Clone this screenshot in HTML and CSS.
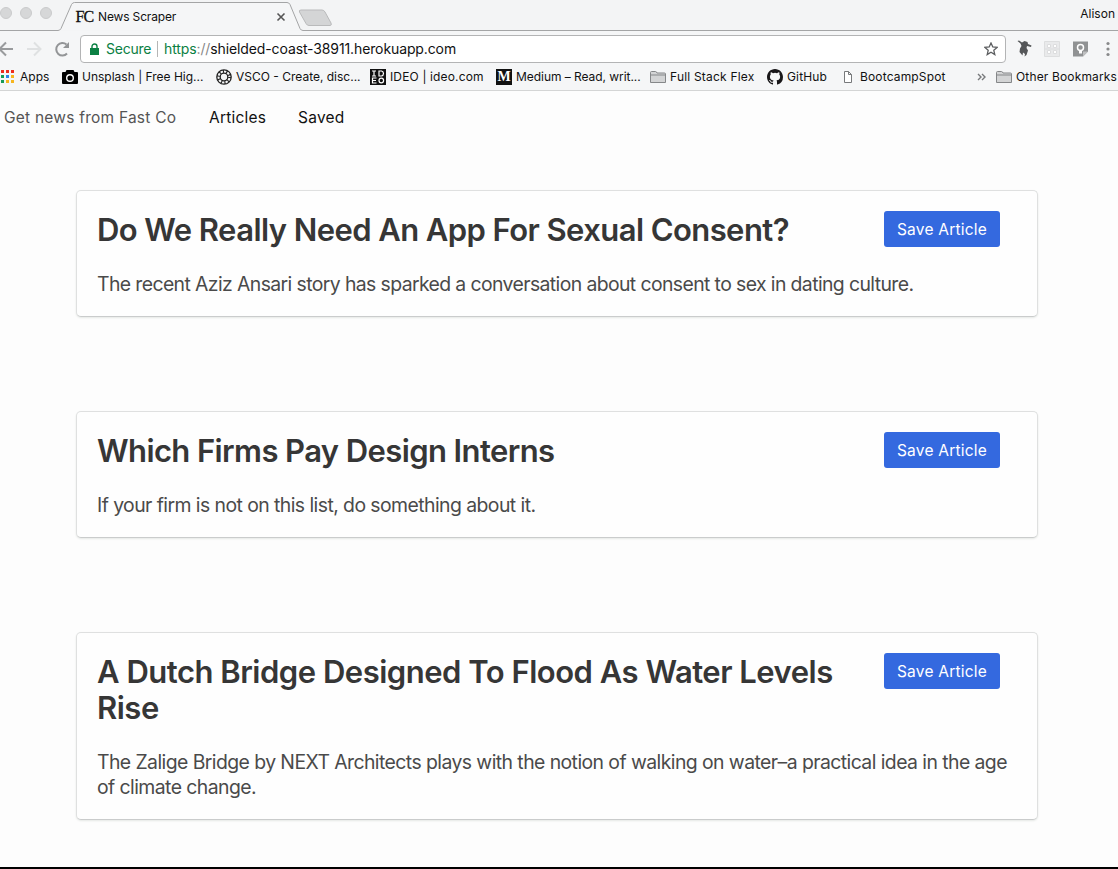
FILE: index.html
```html
<!DOCTYPE html>
<html lang="en">
<head>
<meta charset="utf-8">
<title>News Scraper</title>
<link rel="stylesheet" href="styles.css">
</head>
<body>
<div class="window">
  <header class="chrome">
    <div class="tabstrip">
      <svg class="tab-shape" width="1118" height="31" viewBox="0 0 1118 31">
        <path d="M299.500 12q-.8-2 1.500-2h21q2 0 3 2l6 11q1 2.500-1 2.500h-21q-2 0-3-2z" fill="#d4d5d6" stroke="#b9babb"/>
        <path d="M0 30.500H58q2 0 3-2L71.500 4.500q1-2 3-2H287q2 0 3 2L300 28.500q1 2 3 2H1118" fill="#f5f6f7" stroke="#a4a5a6"/>
      </svg>
      <div class="lights"><i></i><i></i><i></i></div>
      <div class="tab"><b class="favicon">FC</b><span class="tab-title">News Scraper</span>
        <svg class="close" width="10" height="10" viewBox="0 0 10 10"><path d="M1.500 1.500l7 7M8.500 1.500L1.500 8.500" stroke="#555" stroke-width="1.600"/></svg>
      </div>
      <span class="user">Alison</span>
    </div>
    <div class="toolbar">
      <div class="history">
        <svg width="80" height="30" viewBox="0 0 80 30" fill="none" stroke-width="2">
          <path d="M13 15H0M6 8.500L-.5 15 6 21.500" stroke="#999b9d"/>
          <path d="M27 15h13M34 8.500l6.500 6.500-6.500 6.500" stroke="#dfe1e2"/>
          <path d="M67 19.500A6.200 6.200 0 1 1 66.500 10.600" stroke="#939597"/>
          <path d="M69 8v6h-6z" fill="#939597"/>
        </svg>
      </div>
      <div class="address">
        <svg class="lock" width="9" height="12" viewBox="0 0 9 12"><path d="M0 5h9v7H0z" fill="#0b8043"/><path d="M2 5.500V3.500a2.500 2.500 0 0 1 5 0v2" fill="none" stroke="#0b8043" stroke-width="1.400"/></svg>
        <span class="secure">Secure</span>
        <span class="url"><em>https</em><s>://</s>shielded-coast-38911.herokuapp.com</span>
        <svg class="star" width="14" height="14" viewBox="0 0 14 14"><path d="M7 1l1.800 4 4.300.4-3.300 2.900 1 4.300L7 10.300l-3.800 2.300 1-4.300L.9 5.400 5.200 5z" fill="none" stroke="#5c5e60" stroke-width="1.300"/></svg>
      </div>
      <svg class="extensions" width="112" height="30" viewBox="0 0 112 30">
        <path d="M11.500 7l1.500-.5 3 2 2.500-1.500 3 1 .5 2 3.500 1.500-.5 1.500-4-1-.5 2 1.500 2.500-1.500 4.500-2 1.500.5-2.500-2-1.500-.5 3-3-3.500.5-3.500 1.500-2.500-1-2.500z" fill="#555759"/>
        <path d="M38.500 7.500h15v15h-15z" fill="#e9eaeb" stroke="#dddedf"/><path d="M41.500 10.500h3v3h-3zM47.500 10.500h3v3h-3zM41.500 16.500h3v3h-3zM47.500 16.500h3v3h-3zM38.500 15h15" fill="#fff" stroke="#dcddde"/>
        <path d="M67 7.500h15v10l-5 5H67z" fill="#909293"/><path d="M77 22.500v-5h5z" fill="#bfc0c1"/><circle cx="74.500" cy="13.500" r="3" fill="none" stroke="#fff" stroke-width="1.500"/><path d="M73 16.500h3v3h-3z" fill="#fff"/>
        <g fill="#88898a"><circle cx="102" cy="9.500" r="1.600"/><circle cx="102" cy="15" r="1.600"/><circle cx="102" cy="20.500" r="1.600"/></g>
      </svg>
    </div>
    <nav class="bookmarks">
      <div class="bookmark"><svg width="14" height="14" viewBox="0 0 14 14"><path d="M1 0h3v3H1zM6 0h3v3H6zM11 0h3v3h-3z" fill="#ee2c1e"/><path d="M1 5h3v3H1z" fill="#169b57"/><path d="M6 5h3v3H6z" fill="#2a83e8"/><path d="M11 5h3v3h-3zM6 10h3v3H6zM11 10h3v3h-3z" fill="#f6b51e"/><path d="M1 10h3v3H1z" fill="#169b57"/></svg><span class="apps">Apps</span></div>
      <div class="bookmark"><svg width="16" height="16" viewBox="0 0 16 16"><path d="M4.500 1h7l1 2H15q1 0 1 1v10q0 1-1 1H1q-1 0-1-1V4q0-1 1-1h2.500z"/><circle cx="8" cy="9" r="3.300" fill="none" stroke="#fff" stroke-width="1.400"/></svg><span class="unsplash">Unsplash | Free Hig...</span></div>
      <div class="bookmark"><svg width="16" height="16" viewBox="0 0 16 16" fill="none" stroke="#222"><circle cx="8" cy="8" r="7.200" stroke-width="1.300"/><circle cx="8" cy="8" r="3.800" stroke-width="1.300"/><circle cx="8" cy="8" r="5.500" stroke-width="3" stroke-dasharray="1.100 2.350"/></svg><span class="vsco">VSCO - Create, disc...</span></div>
      <div class="bookmark"><svg width="16" height="16" viewBox="0 0 16 16"><path d="M0 0h16v16H0z" fill="#111"/><path d="M2 2h4M4 2v5M2 7h4M9 2v5h2.500q2-.5 2-2.500t-2-2.500zM6.500 9H2.500v5h4M2.500 11.500h3.500" fill="none" stroke="#fff" stroke-width="1.200"/><circle cx="11.300" cy="11.500" r="2.300" fill="none" stroke="#fff" stroke-width="1.200"/></svg><span class="ideo">IDEO | ideo.com</span></div>
      <div class="bookmark"><b class="medium-logo">M</b><span class="medium">Medium – Read, writ...</span></div>
      <div class="bookmark"><svg width="16" height="14" viewBox="0 0 16 14"><path d="M.5 12.500v-10q0-1 1-1h4q1 0 1.500 1.500h7.500q1 0 1 1v8.500z" fill="#d3d4d5" stroke="#858789"/><path d="M1 5h14" stroke="#858789"/></svg><span class="stack">Full Stack Flex</span></div>
      <div class="bookmark"><svg width="16" height="16" viewBox="0 0 16 16"><path fill="#181618" d="M8 0C3.580 0 0 3.580 0 8c0 3.540 2.290 6.530 5.470 7.590.4.070.55-.17.55-.38 0-.19-.01-.82-.01-1.490-2.010.37-2.530-.49-2.690-.94-.09-.23-.48-.94-.82-1.130-.28-.15-.68-.52-.01-.53.63-.01 1.080.58 1.230.82.72 1.210 1.870.87 2.330.66.07-.52.28-.87.51-1.070-1.780-.2-3.640-.89-3.640-3.950 0-.87.31-1.590.82-2.150-.08-.2-.36-1.020.08-2.120 0 0 .67-.21 2.200.82a7.400 7.400 0 0 1 4 0c1.530-1.040 2.200-.82 2.200-.82.44 1.100.16 1.920.08 2.120.51.56.82 1.270.82 2.150 0 3.070-1.870 3.750-3.650 3.950.29.25.54.73.54 1.480 0 1.070-.01 1.930-.01 2.200 0 .21.15.46.55.38A8 8 0 0 0 16 8c0-4.420-3.580-8-8-8z"/></svg><span class="github">GitHub</span></div>
      <div class="bookmark page-bookmark"><svg width="8" height="12" viewBox="0 0 8 12"><path d="M.5.500h4l3 3v8h-7zM4.500.500v3h3" fill="#fff" stroke="#77797b"/></svg><span class="boot">BootcampSpot</span></div>
      <svg class="more" width="9" height="8" viewBox="0 0 9 8"><path d="M1 1l3 3-3 3M5 1l3 3-3 3" fill="none" stroke="#77797b" stroke-width="1.400"/></svg>
      <div class="bookmark"><svg width="16" height="14" viewBox="0 0 16 14"><path d="M.5 12.500v-10q0-1 1-1h4q1 0 1.500 1.500h7.500q1 0 1 1v8.500z" fill="#d3d4d5" stroke="#858789"/><path d="M1 5h14" stroke="#858789"/></svg><span class="other">Other Bookmarks</span></div>
    </nav>
  </header>
  <nav class="site-nav"><span class="brand">Get news from Fast Co</span><a class="link-articles">Articles</a><a class="link-saved">Saved</a></nav>
  <main class="articles">
    <article class="card">
      <div class="card-head"><h2 class="t1">Do We Really Need An App For Sexual Consent?</h2><button class="save">Save Article</button></div>
      <p class="p1">The recent Aziz Ansari story has sparked a conversation about consent to sex in dating culture.</p>
    </article>
    <article class="card">
      <div class="card-head"><h2 class="t2">Which Firms Pay Design Interns</h2><button class="save">Save Article</button></div>
      <p class="p2">If your firm is not on this list, do something about it.</p>
    </article>
    <article class="card">
      <div class="card-head"><h2 class="t3">A Dutch Bridge Designed To Flood As Water Levels<br>Rise</h2><button class="save">Save Article</button></div>
      <p class="p3">The Zalige Bridge by NEXT Architects plays with the notion of walking on water–a practical idea in the age<br>of climate change.</p>
    </article>
  </main>
</div>
</body>
</html>
```
FILE: styles.css
```css
* { box-sizing: border-box; }
body { margin: 0; font-family: Inter, "Liberation Sans", sans-serif; background: #fdfdfd; }
.window { width: 1118px; height: 869px; overflow: hidden; border-bottom: 2px solid #000; }
svg { display: block; flex: none; }
span, a, h2, p, button { white-space: nowrap; }
.chrome { height: 91px; background: #f5f6f7; border-bottom: 1px solid #d4d5d5; color: #111; }
.tabstrip { height: 31px; position: relative; display: flex; background: #f3f4f5; }
.tab-shape { position: absolute; left: 0; top: 0; }
.lights { position: relative; display: flex; gap: 8px; width: 75px; padding-top: 7px; }
.lights i { width: 12px; height: 12px; border-radius: 50%; background: #d6d7d8; border: 1px solid #cacbcc; }
.tab { position: relative; width: 211px; height: 33px; display: flex; align-items: center; font-size: 12px; }
.tab-title { letter-spacing: -0.15px; }
.favicon { font: 16px/16px "Liberation Serif", serif; letter-spacing: -1px; width: 23px; padding-left: 0.5px; -webkit-text-stroke: 0.3px #111; }
.close { margin-left: auto; }
.user { position: relative; margin-left: auto; padding: 6px 3px 0 0; font-size: 12px; line-height: 16px; }
.toolbar { height: 32px; display: flex; padding-top: 3px; }
.history { width: 80px; }
.address { width: 926px; height: 28px; margin-top: 1px; border: 1px solid #b3b4b5; border-radius: 4px; background: #fff; display: flex; align-items: center; padding: 0 7px 0 9px; font-size: 14px; }
.secure { margin-left: 7px; padding-right: 6px; border-right: 1px solid #b5b5b5; color: #0b8043; width: 52px; line-height: 16px; letter-spacing: -0.25px; }
.url { margin-left: 6px; padding-bottom: 2px; letter-spacing: -0.115px; }
.url em { font-style: normal; color: #0b8043; }
.url s { text-decoration: none; color: #888; }
.star { margin-left: auto; }
.bookmarks { height: 27px; display: grid; grid-template-columns: 62px 154px 154px 126px 154px 117px 75px 135px 19px 1fr; align-items: center; font-size: 12px; }
.bookmark { display: flex; align-items: center; gap: 4px; min-width: 0; }
.bookmark:first-child { gap: 6px; }
.ideo, .boot, .other, .github { letter-spacing: 0.15px; }
.stack { letter-spacing: 0.2px; }
.medium { letter-spacing: -0.05px; }
.page-bookmark { padding-left: 2px; gap: 8px; }
.medium-logo { width: 16px; height: 16px; background: #111; color: #fff; font: bold 14px/16px "Liberation Serif", serif; text-align: center; }
.site-nav { height: 53px; display: flex; align-items: center; padding-left: 4px; font-size: 15.500px; letter-spacing: 0.23px; color: #111; }
.brand { width: 205px; color: #555; }
.link-articles { width: 89px; }
.articles { margin: 46px 80px 0 76px; display: flex; flex-direction: column; gap: 94px; }
.card { border: 1px solid #dfe0e0; border-bottom-color: #cacccc; border-radius: 5px; padding: 20px 20px 19px; background: #fefefe; box-shadow: 0 1px 2px #e5e8e5; }
.card-head { display: flex; justify-content: space-between; align-items: flex-start; padding-right: 17px; }
h2 { margin: 0; padding-top: 1px; font-size: 31px; line-height: 36px; font-weight: 600; color: #363636; }
.t1 { letter-spacing: -0.570px; }
.t2 { letter-spacing: -0.600px; }
.t3 { letter-spacing: -0.490px; }
p { margin: 24px 0 0; font-size: 19.400px; line-height: 25px; color: #4a4a4a; }
.p1 { letter-spacing: -0.600px; }
.p2 { letter-spacing: -0.560px; }
.p3 { letter-spacing: -0.565px; }
.save { width: 116px; height: 36px; flex: none; border: 0; border-radius: 3px; background: #3469df; color: #fff; font: 15.500px Inter, sans-serif; letter-spacing: 0.23px; padding: 0; }
```
